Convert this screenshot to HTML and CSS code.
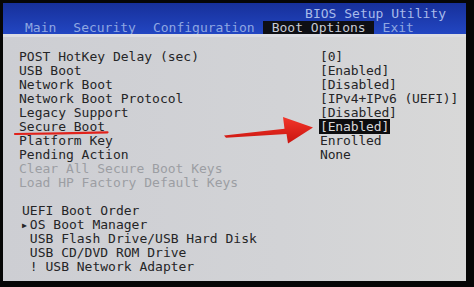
FILE: index.html
```html
<!DOCTYPE html>
<html>
<head>
<meta charset="utf-8">
<link rel="stylesheet" href="styles.css">
</head>
<body>
<div class="screen">
  <header class="top">
    <div class="title">BIOS Setup Utility</div>
    <nav class="tabs">
      <span class="tab">Main</span>
      <span class="tab">Security</span>
      <span class="tab">Configuration</span>
      <span class="tab active">Boot Options</span>
      <span class="tab">Exit</span>
    </nav>
  </header>
  <main class="panel">
    <div class="rows">
      <div class="row"><span class="label">POST HotKey Delay (sec)</span><span class="val">[0]</span></div>
      <div class="row"><span class="label">USB Boot</span><span class="val">[Enabled]</span></div>
      <div class="row"><span class="label">Network Boot</span><span class="val">[Disabled]</span></div>
      <div class="row"><span class="label">Network Boot Protocol</span><span class="val">[IPv4+IPv6 (UEFI)]</span></div>
      <div class="row"><span class="label">Legacy Support</span><span class="val">[Disabled]</span></div>
      <div class="row"><span class="label">Secure Boot</span><span class="val"><span class="sel">[Enabled]</span></span></div>
      <div class="row"><span class="label">Platform Key</span><span class="val">Enrolled</span></div>
      <div class="row"><span class="label">Pending Action</span><span class="val">None</span></div>
      <div class="row dim"><span class="label">Clear All Secure Boot Keys</span></div>
      <div class="row dim"><span class="label">Load HP Factory Default Keys</span></div>
    </div>
    <div class="blank"></div>
    <div class="order">
      <div class="line">UEFI Boot Order</div>
      <div class="line"><span class="ptr">▶</span>OS Boot Manager</div>
      <div class="line"> USB Flash Drive/USB Hard Disk</div>
      <div class="line"> USB CD/DVD ROM Drive</div>
      <div class="line"> ! USB Network Adapter</div>
    </div>
  </main>
</div>
<svg class="annot" width="474" height="287" viewBox="0 0 474 287">
  <defs>
    <linearGradient id="ag" x1="0" y1="0" x2="0" y2="1">
      <stop offset="0" stop-color="#f2362a"/>
      <stop offset="1" stop-color="#c9140f"/>
    </linearGradient>
  </defs>
  <path d="M15 134 Q60 133.6 107.5 132.4" fill="none" stroke="#e0221b" stroke-width="2.2" stroke-linecap="round"/>
  <polygon points="224,135.5 284.5,128.8 283,117 313,127.5 288,143.5 286.5,134 226,137.8" fill="url(#ag)"/>
</svg>
</body>
</html>
```
FILE: styles.css
```css
html, body {
  margin: 0;
  padding: 0;
}
body {
  width: 474px;
  height: 287px;
  overflow: hidden;
  position: relative;
  background: #060606;
  font-family: "DejaVu Sans Mono", "Liberation Mono", monospace;
  font-size: 13px;
}
.screen {
  margin: 3px 8px 0 3px;
  height: 278px;
  display: flex;
  flex-direction: column;
  background: linear-gradient(90deg, #cdced3 0%, #d2d3d6 60%, #d8d8d8 100%);
  overflow: hidden;
}
.top {
  height: 31px;
  box-sizing: border-box;
  padding-top: 4px;
  background: linear-gradient(#17309a, #2246c2);
}
.title {
  line-height: 14px;
  height: 14px;
  text-align: right;
  padding-right: 20px;
  color: #a8bbea;
}
.tabs {
  display: flex;
  line-height: 13px;
  height: 13px;
  padding-left: 13.5px;
}
.tab {
  padding: 0 8.5px;
  color: #8fa7e2;
  white-space: pre;
}
.tab.active {
  background: #0e0f14;
  color: #c7cbd6;
}
.panel {
  flex: 1;
  border-top: 3px solid #dcdde2;
  padding: 13px 0 0 16px;
  color: #252527;
}
.row {
  display: grid;
  grid-template-columns: 301px auto;
  line-height: 14px;
  height: 14px;
  white-space: pre;
}
.val {
  letter-spacing: -0.15px;
}
.row.dim {
  color: #9c9ea3;
}
.sel {
  background: #0d0d0f;
  color: #d6d6d8;
  padding: 0 1px;
  margin-left: -1px;
}
.blank {
  height: 14px;
}
.order {
  padding-left: 3px;
}
.line {
  line-height: 14px;
  height: 14px;
  white-space: pre;
}
.ptr {
  display: inline-block;
  width: 7.83px;
  font-size: 8px;
  vertical-align: top;
  line-height: 15px;
}
.annot {
  position: absolute;
  left: 0;
  top: 0;
  pointer-events: none;
}
```
